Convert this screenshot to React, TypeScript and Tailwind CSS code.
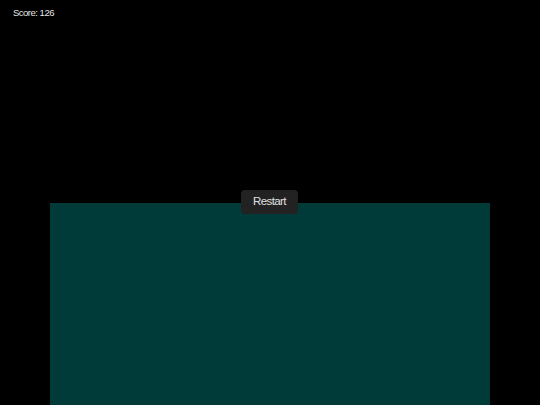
export default function App() {
  return (
    <main className="relative h-[405px] w-[540px] overflow-hidden bg-black font-['Liberation_Sans',Arial,sans-serif]">
      <p className="pl-[13px] pt-[7px] text-[9.5px] leading-[12px] tracking-[-0.5px] text-[#e5e5e5]">Score: 126</p>
      <div className="ml-[50px] mt-[184px] h-[210px] w-[440px] bg-[#003b39]" />
      <button className="absolute left-[241px] top-[190px] h-[24px] w-[57px] rounded-[4px] bg-[#222222] text-[11.5px] tracking-[-0.6px] text-[#e0e0e0]">
        Restart
      </button>
    </main>
  )
}
